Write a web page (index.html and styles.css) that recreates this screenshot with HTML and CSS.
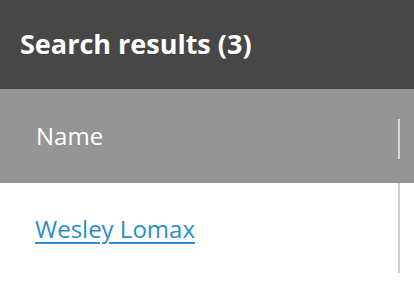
FILE: index.html
```html
<!DOCTYPE html>
<html lang="en">

<head>
	<meta charset="utf-8">
	<meta name="viewport" content="width=device-width, initial-scale=1.0">
	<title>Search results</title>

<link rel="stylesheet" href="styles.css">

</head>

<body>
	<header class="results_head">
		<h1>Search results (3)</h1>
	</header>
	<table class="results">
		<thead>
			<tr>
				<th class="col_name"><span class="th_text">Name</span><span class="resizer"></span></th>
				<th class="col_rest"></th>
			</tr>
		</thead>
		<tbody>
			<tr>
				<td class="col_name"><a href="#">Wesley Lomax</a></td>
				<td class="col_rest"></td>
			</tr>
		</tbody>
	</table>
</body>

</html>
```

FILE: styles.css
```css
body {
	margin:0;
	font-family:"Open Sans", "Noto Sans", sans-serif;
	background-color:white;
}

.results_head {
	background-color:#474747;
	height:89px;
	display:flex;
	align-items:center;
	padding-left:20px;
	box-sizing:border-box;
}

.results_head h1 {
	margin:0;
	color:white;
	font-size:27px;
	font-weight:bold;
	line-height:1;
	padding-bottom:2px;
}

table.results {
	border-collapse:collapse;
	width:100%;
}

table.results th, table.results td {
	padding:0;
	text-align:left;
	vertical-align:middle;
}

table.results th {
	background-color:#959595;
	height:94px;
	color:white;
	font-weight:normal;
	font-size:24px;
}

table.results .col_name {
	width:399px;
	box-sizing:border-box;
}

table.results th.col_name {
	position:relative;
	padding-left:36px;
}

.th_text {
	position:relative;
	top:-1px;
}

.resizer {
	position:absolute;
	right:-1px;
	top:30px;
	width:2px;
	height:40px;
	background-color:#d8d8d8;
}

table.results td {
	height:90px;
	font-size:24px;
}

table.results td.col_name {
	padding-left:35px;
	border-right:2px solid #cfcfcf;
}

td.col_name a {
	color:#2a8fc9;
	text-decoration:underline;
	text-underline-offset:4px;
	text-decoration-thickness:2px;
}
```
